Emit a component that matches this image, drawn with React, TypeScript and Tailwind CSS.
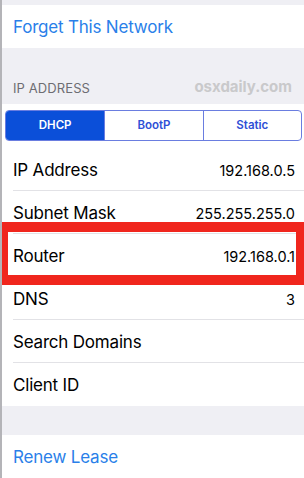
import React from "react";

const font = { fontFamily: "Inter, 'Liberation Sans', sans-serif" };

function Row({ label, value, sep = true }: { label: string; value?: string; sep?: boolean }) {
  return (
    <div className="relative h-[43px] flex items-center justify-between pl-[11px] pr-[9px] pt-[2px]">
      <span className="text-[17px] text-black tracking-[-0.2px]">{label}</span>
      {value && <span className="text-[14.5px] text-black">{value}</span>}
      {sep && <div className="absolute bottom-0 left-[11px] right-0 h-px bg-[#e2e2e6]" />}
    </div>
  );
}

export default function App() {
  return (
    <div className="w-[304px] h-[478px] overflow-hidden bg-[#efeff4] border-l-2 border-[#b4b4b8] relative" style={font}>
      <div className="h-[5px]" />
      <div className="h-[43px] bg-white flex items-center pl-[11px] pt-[3px]">
        <span className="text-[17px] text-[#2a7fe9] tracking-[-0.2px]">Forget This Network</span>
      </div>
      <div className="h-[56px] flex items-end justify-between pl-[11px] pr-[12px] pb-[6px]">
        <span className="text-[13px] text-[#6d6d72] tracking-[0.1px]">IP ADDRESS</span>
        <span className="text-[15px] font-bold text-[#c9c9cb]">osxdaily.com</span>
      </div>
      <div className="bg-white pt-[6px] pb-[7px] pl-[3px] pr-[2px]">
        <div className="h-[31px] grid grid-cols-3 border border-[#6a7de0] rounded-[4px] overflow-hidden">
          <div className="bg-[#0b4fd9] flex items-center justify-center text-white text-[11.5px] font-semibold">DHCP</div>
          <div className="flex items-center justify-center text-[#2e4fd6] text-[11.5px] font-semibold border-l border-[#6a7de0]">BootP</div>
          <div className="flex items-center justify-center text-[#2e4fd6] text-[11.5px] font-semibold border-l border-[#6a7de0]">Static</div>
        </div>
      </div>
      <div className="bg-white">
        <Row label="IP Address" value="192.168.0.5" />
        <Row label="Subnet Mask" value="255.255.255.0" />
        <div className="relative">
          <Row label="Router" value="192.168.0.1" sep={false} />
          <div className="absolute -top-[12px] -bottom-[8px] -left-[2px] right-0 border-[#f0261d] border-x-[8px] border-y-[10px] z-10" />
        </div>
        <Row label="DNS" value="3" />
        <Row label="Search Domains" />
        <Row label="Client ID" sep={false} />
      </div>
      <div className="h-[29px]" />
      <div className="h-[43px] bg-white flex items-center pl-[11px] pt-[3px]">
        <span className="text-[17px] text-[#2a7fe9] tracking-[-0.2px]">Renew Lease</span>
      </div>
    </div>
  );
}
